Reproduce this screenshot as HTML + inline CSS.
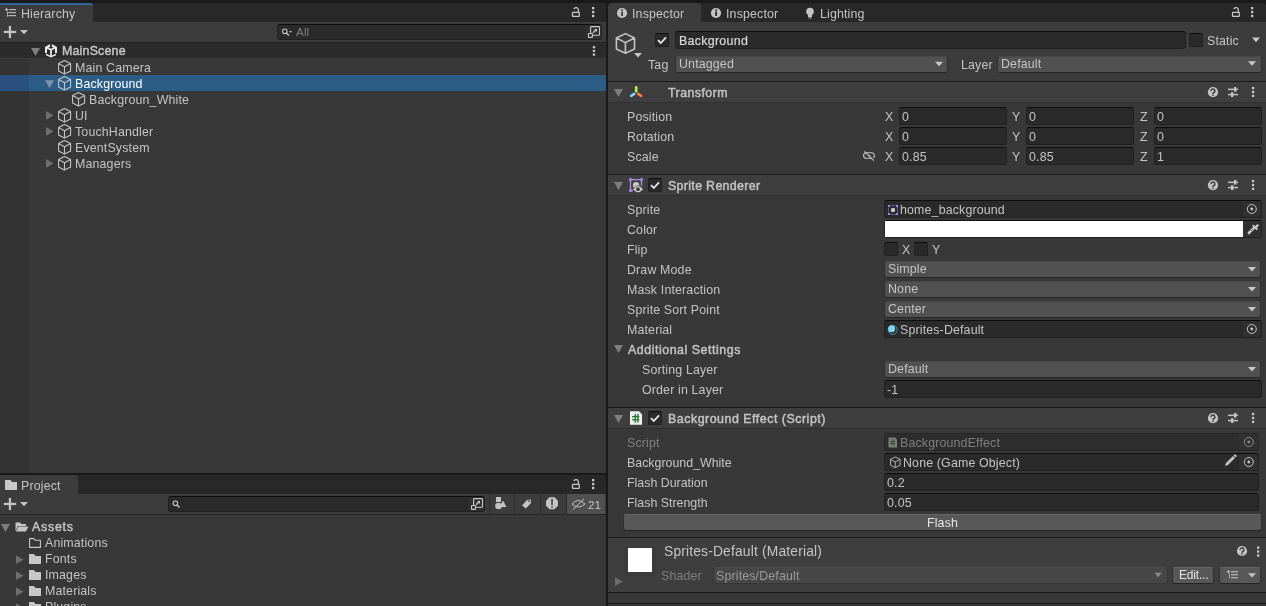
<!DOCTYPE html>
<html><head><meta charset="utf-8">
<style>
*{box-sizing:border-box;margin:0;padding:0}
html,body{width:1266px;height:606px;overflow:hidden;background:#191919}
body{position:relative;font-family:"Liberation Sans",sans-serif;font-size:12.4px;color:#c4c4c4}
.a{position:absolute}
.t{position:absolute;white-space:pre;line-height:16px;will-change:transform;letter-spacing:0.15px}
.b{font-weight:normal;letter-spacing:0.45px;-webkit-text-stroke:0.45px #c4c4c4}
.fld{position:absolute;background:#2a2a2a;border:1px solid #212121;border-top-color:#0d0d0d;border-radius:3px;height:18px}
.dd{position:absolute;background:#515151;border:1px solid #303030;border-top-color:#474747;border-bottom-color:#262626;border-radius:3px;height:17px}
.btn{position:absolute;background:#585858;border:1px solid #303030;border-top-color:#656565;border-radius:3px}
.chk{position:absolute;background:#2a2a2a;border:1px solid #212121;border-top-color:#0d0d0d;border-radius:2px;width:14px;height:14px}
.hdr{position:absolute;left:608px;width:658px;height:20px;background:#3e3e3e}
.line{position:absolute;left:608px;width:658px;height:1px;background:#1a1a1a}
.hl{position:absolute;left:608px;width:658px;height:1px;background:#303030}
#ov{position:absolute;left:0;top:0;overflow:visible}
</style></head><body>

<!-- ============ HIERARCHY ============ -->
<div class="a" style="left:0;top:3px;width:606px;height:470px;background:#383838;border-top-right-radius:4px;overflow:hidden">
  <div class="a" style="left:0;top:0;width:606px;height:19px;background:#282828"></div>
  <div class="a" style="left:0;top:0;width:93px;height:19px;background:#3c3c3c;border-top-right-radius:3px;border-top:2px solid #2e6598"></div>
  <div class="a" style="left:0;top:19px;width:606px;height:21px;background:#3c3c3c;border-bottom:1px solid #232323"></div>
  <div class="a" style="left:0;top:40px;width:606px;height:15px;background:#2b2b2b"></div>
  <div class="a" style="left:0;top:55px;width:606px;height:1px;background:#3a3a3a"></div>
  <div class="a" style="left:0;top:56px;width:29px;height:415px;background:#333333"></div>
  <div class="a" style="left:0;top:72px;width:606px;height:16px;background:#2c5d87"></div>
  <div class="a" style="left:0;top:72px;width:29px;height:16px;background:#2a5080"></div>
</div>
<div class="t" style="left:21px;top:6px">Hierarchy</div>
<div class="t b" style="left:62px;top:43px;letter-spacing:0.2px">MainScene</div>
<div class="t" style="left:75px;top:59.5px">Main Camera</div>
<div class="t" style="left:75px;top:75.5px;color:#fff">Background</div>
<div class="t" style="left:89px;top:91.5px">Backgroun_White</div>
<div class="t" style="left:75px;top:107.5px">UI</div>
<div class="t" style="left:75px;top:123.5px">TouchHandler</div>
<div class="t" style="left:75px;top:139.5px">EventSystem</div>
<div class="t" style="left:75px;top:155.5px">Managers</div>

<!-- search -->
<div class="a" style="left:277px;top:24px;width:325px;height:16px;background:#2a2a2a;border:1px solid #212121;border-top-color:#0d0d0d;border-radius:3px"></div>
<div class="a" style="left:585px;top:25px;width:16px;height:14px;background:#303030;border-radius:0 2px 2px 0"></div>
<div class="t" style="left:296px;top:24px;color:#7f7f7f;font-size:11.6px">All</div>

<!-- ============ PROJECT ============ -->
<div class="a" style="left:0;top:475px;width:606px;height:131px;background:#383838;border-top-right-radius:4px;overflow:hidden">
  <div class="a" style="left:0;top:0;width:606px;height:19px;background:#282828"></div>
  <div class="a" style="left:0;top:0;width:78px;height:19px;background:#3c3c3c;border-top-right-radius:3px"></div>
  <div class="a" style="left:0;top:19px;width:606px;height:21px;background:#3c3c3c;border-bottom:1px solid #242424"></div>
  <div class="a" style="left:489px;top:19px;width:25px;height:20px;background:#3c3c3c;border-left:1px solid #2e2e2e"></div>
  <div class="a" style="left:514px;top:19px;width:26px;height:20px;background:#3c3c3c;border-left:1px solid #2e2e2e"></div>
  <div class="a" style="left:540px;top:19px;width:26px;height:20px;background:#3c3c3c;border-left:1px solid #2e2e2e"></div>
  <div class="a" style="left:566px;top:19px;width:39px;height:20px;background:#505050;border-left:1px solid #2e2e2e"></div>
</div>
<div class="a" style="left:168px;top:496px;width:317px;height:16px;background:#2a2a2a;border:1px solid #212121;border-top-color:#0d0d0d;border-radius:3px"></div>
<div class="a" style="left:469px;top:497px;width:15px;height:14px;background:#303030;border-radius:0 2px 2px 0"></div>
<div class="t" style="left:21px;top:478px">Project</div>
<div class="t" style="left:587.5px;top:497px;font-size:11.6px">21</div>
<div class="t b" style="left:32px;top:519px;letter-spacing:0.75px">Assets</div>
<div class="t" style="left:45px;top:535px">Animations</div>
<div class="t" style="left:45px;top:551px">Fonts</div>
<div class="t" style="left:45px;top:567px">Images</div>
<div class="t" style="left:45px;top:583px">Materials</div>
<div class="t" style="left:45px;top:599px">Plugins</div>

<!-- ============ INSPECTOR ============ -->
<div class="a" style="left:608px;top:3px;width:658px;height:603px;background:#383838;border-top-left-radius:4px;border-top-right-radius:4px;overflow:hidden">
  <div class="a" style="left:0;top:0;width:658px;height:19px;background:#282828"></div>
  <div class="a" style="left:0;top:0;width:93px;height:19px;background:#3c3c3c;border-top-right-radius:3px"></div>
  <div class="a" style="left:0;top:19px;width:658px;height:59px;background:#3c3c3c"></div>
</div>
<div class="t" style="left:632px;top:6px">Inspector</div>
<div class="t" style="left:726px;top:6px">Inspector</div>
<div class="t" style="left:820px;top:6px">Lighting</div>

<!-- GameObject header -->
<div class="fld" style="left:675px;top:31px;width:511px"></div>
<div class="t" style="left:678.5px;top:33px;color:#d8d8d8;letter-spacing:0.3px;-webkit-text-stroke:0.2px #d8d8d8">Background</div>
<div class="chk" style="left:655px;top:33px"></div>
<div class="chk" style="left:1189px;top:33px"></div>
<div class="t" style="left:1207px;top:33px">Static</div>
<div class="t" style="left:648px;top:57px">Tag</div>
<div class="dd" style="left:675px;top:56px;width:273px;height:17px"></div>
<div class="t" style="left:678.5px;top:56px">Untagged</div>
<div class="t" style="left:961px;top:57px">Layer</div>
<div class="dd" style="left:997px;top:56px;width:265px;height:17px"></div>
<div class="t" style="left:1001px;top:56px">Default</div>

<!-- Transform -->
<div class="line" style="top:81px"></div>
<div class="hdr" style="top:82px"></div>
<div class="hl" style="top:102px"></div>
<div class="t b" style="left:668px;top:85px">Transform</div>
<div class="t" style="left:627px;top:109px">Position</div>
<div class="t" style="left:627px;top:129px">Rotation</div>
<div class="t" style="left:627px;top:149px">Scale</div>

<div class="t" style="left:885px;top:109px">X</div>
<div class="fld" style="left:899px;top:107px;width:108px"></div>
<div class="t" style="left:902px;top:109px">0</div>
<div class="t" style="left:1012px;top:109px">Y</div>
<div class="fld" style="left:1026px;top:107px;width:108px"></div>
<div class="t" style="left:1029px;top:109px">0</div>
<div class="t" style="left:1140px;top:109px">Z</div>
<div class="fld" style="left:1154px;top:107px;width:108px"></div>
<div class="t" style="left:1157px;top:109px">0</div>

<div class="t" style="left:885px;top:129px">X</div>
<div class="fld" style="left:899px;top:127px;width:108px"></div>
<div class="t" style="left:902px;top:129px">0</div>
<div class="t" style="left:1012px;top:129px">Y</div>
<div class="fld" style="left:1026px;top:127px;width:108px"></div>
<div class="t" style="left:1029px;top:129px">0</div>
<div class="t" style="left:1140px;top:129px">Z</div>
<div class="fld" style="left:1154px;top:127px;width:108px"></div>
<div class="t" style="left:1157px;top:129px">0</div>

<div class="t" style="left:885px;top:149px">X</div>
<div class="fld" style="left:899px;top:147px;width:108px"></div>
<div class="t" style="left:902px;top:149px">0.85</div>
<div class="t" style="left:1012px;top:149px">Y</div>
<div class="fld" style="left:1026px;top:147px;width:108px"></div>
<div class="t" style="left:1029px;top:149px">0.85</div>
<div class="t" style="left:1140px;top:149px">Z</div>
<div class="fld" style="left:1154px;top:147px;width:108px"></div>
<div class="t" style="left:1157px;top:149px">1</div>

<!-- Sprite Renderer -->
<div class="line" style="top:174px"></div>
<div class="hdr" style="top:175px"></div>
<div class="hl" style="top:195px"></div>
<div class="chk" style="left:648px;top:178px"></div>
<div class="t b" style="left:668px;top:178px;letter-spacing:0.33px">Sprite Renderer</div>

<div class="t" style="left:627px;top:202px">Sprite</div>
<div class="t" style="left:627px;top:222px">Color</div>
<div class="t" style="left:627px;top:242px">Flip</div>
<div class="t" style="left:627px;top:262px">Draw Mode</div>
<div class="t" style="left:627px;top:282px">Mask Interaction</div>
<div class="t" style="left:627px;top:302px">Sprite Sort Point</div>
<div class="t" style="left:627px;top:322px">Material</div>
<div class="t b" style="left:628px;top:342px;letter-spacing:0.54px">Additional Settings</div>
<div class="t" style="left:642px;top:362px">Sorting Layer</div>
<div class="t" style="left:642px;top:382px">Order in Layer</div>

<div class="fld" style="left:884px;top:200px;width:378px"></div>
<div class="a" style="left:1243px;top:201px;width:18px;height:16px;background:#303030;border-radius:0 2px 2px 0"></div>
<div class="t" style="left:900px;top:202px">home_background</div>
<div class="fld" style="left:884px;top:220px;width:378px"></div>
<div class="a" style="left:885px;top:221px;width:358px;height:16px;background:#ffffff"></div>
<div class="a" style="left:1243px;top:221px;width:18px;height:16px;background:#303030;border-radius:0 2px 2px 0"></div>
<div class="chk" style="left:884px;top:242px"></div>
<div class="t" style="left:902px;top:242px">X</div>
<div class="chk" style="left:914px;top:242px"></div>
<div class="t" style="left:932px;top:242px">Y</div>
<div class="dd" style="left:884px;top:261px;width:377px"></div>
<div class="t" style="left:888px;top:261px">Simple</div>
<div class="dd" style="left:884px;top:281px;width:377px"></div>
<div class="t" style="left:888px;top:281px">None</div>
<div class="dd" style="left:884px;top:301px;width:377px"></div>
<div class="t" style="left:888px;top:301px">Center</div>
<div class="fld" style="left:884px;top:320px;width:378px"></div>
<div class="a" style="left:1243px;top:321px;width:18px;height:16px;background:#303030;border-radius:0 2px 2px 0"></div>
<div class="t" style="left:900px;top:322px">Sprites-Default</div>
<div class="dd" style="left:884px;top:361px;width:377px"></div>
<div class="t" style="left:888px;top:361px">Default</div>
<div class="fld" style="left:884px;top:380px;width:378px"></div>
<div class="t" style="left:887px;top:382px">-1</div>

<!-- Background Effect (Script) -->
<div class="line" style="top:407px"></div>
<div class="hdr" style="top:408px"></div>
<div class="hl" style="top:428px"></div>
<div class="chk" style="left:648px;top:411px"></div>
<div class="t b" style="left:668px;top:411px;letter-spacing:0.52px">Background Effect (Script)</div>

<div class="t" style="left:627px;top:435px;color:#7f7f7f">Script</div>
<div class="t" style="left:627px;top:455px;letter-spacing:0">Background_White</div>
<div class="t" style="left:627px;top:475px;letter-spacing:0">Flash Duration</div>
<div class="t" style="left:627px;top:495px;letter-spacing:0">Flash Strength</div>

<div class="fld" style="left:884px;top:433px;width:375px;border-color:#262626;background:#2d2d2d"></div>
<div class="a" style="left:1239px;top:434px;width:19px;height:16px;background:#313131;border-radius:0 2px 2px 0"></div>
<div class="t" style="left:900px;top:435px;color:#7f7f7f">BackgroundEffect</div>
<div class="fld" style="left:884px;top:453px;width:375px"></div>
<div class="a" style="left:1239px;top:454px;width:19px;height:16px;background:#303030;border-radius:0 2px 2px 0"></div>
<div class="t" style="left:903px;top:455px">None (Game Object)</div>
<div class="fld" style="left:884px;top:473px;width:375px"></div>
<div class="t" style="left:887px;top:475px">0.2</div>
<div class="fld" style="left:884px;top:493px;width:375px"></div>
<div class="t" style="left:887px;top:495px">0.05</div>
<div class="btn" style="left:623px;top:514px;width:639px;height:17px;border-bottom-color:#242424"></div>
<div class="t" style="left:927px;top:515px;color:#e4e4e4">Flash</div>

<!-- Material -->
<div class="line" style="top:537px"></div>
<div class="a" style="left:608px;top:538px;width:658px;height:54px;background:#3e3e3e"></div>
<div class="line" style="top:592px"></div>
<div class="line" style="top:603px"></div>
<div class="a" style="left:624px;top:545px;width:32px;height:31px;background:#3b3b3b;border-radius:2px"></div>
<div class="a" style="left:628px;top:548px;width:24px;height:24px;background:#fff"></div>
<div class="t" style="left:664px;top:543.5px;font-size:13.8px;letter-spacing:0.18px">Sprites-Default (Material)</div>
<div class="t" style="left:661px;top:567.7px;color:#7f7f7f">Shader</div>
<div class="dd" style="left:713px;top:567px;width:455px;height:17px;background:#474747;border-color:#363636;border-top-color:#4c4c4c"></div>
<div class="t" style="left:716px;top:567.5px;color:#9a9a9a">Sprites/Default</div>
<div class="btn" style="left:1172px;top:567px;width:42px;height:17px;border-bottom-color:#242424"></div>
<div class="t" style="left:1178.5px;top:567px;color:#e4e4e4;font-size:12px;letter-spacing:-0.2px">Edit...</div>
<div class="btn" style="left:1219px;top:567px;width:42px;height:17px;border-bottom-color:#242424"></div>


<svg id="ov" width="1266" height="606" viewBox="0 0 1266 606">
<defs>
  <g id="cube" fill="none" stroke="#c4c4c4" stroke-width="1.1" stroke-linejoin="round">
    <path d="M6.5 0.6 L12.6 3.6 L12.6 10.9 L6.5 13.9 L0.6 10.9 L0.6 3.6 Z M0.6 3.6 L6.5 6.8 L12.6 3.6 M6.5 6.8 L6.5 13.9"/>
  </g>
  <g id="kebab" fill="#c8c8c8"><rect x="0" y="0" width="2.3" height="2.3"/><rect x="0" y="3.9" width="2.3" height="2.3"/><rect x="0" y="7.8" width="2.3" height="2.3"/></g>
  <path id="tdown" d="M0 0 L9 0 L4.5 8 Z" fill="#7f7f7f"/>
  <path id="tright" d="M0 0 L7.5 4.4 L0 8.8 Z" fill="#6f6f6f"/>
  <g id="lock" fill="none" stroke="#c8c8c8" stroke-width="1.25">
    <rect x="1.2" y="5.8" width="6.8" height="4.0" rx="0.6"/>
    <path d="M7.1 5.8 L7.1 3.4 A2.45 2.45 0 0 0 2.5 2.3"/>
  </g>
  <g id="target" fill="none" stroke="#c4c4c4" stroke-width="1"><circle cx="0" cy="0" r="4.5"/><circle cx="0" cy="0" r="1.4" fill="#c4c4c4" stroke="none"/></g>
  <g id="chkmark"><path d="M3 7.2 L5.8 10 L11 4.3" fill="none" stroke="#e8e8e8" stroke-width="1.8"/></g>
  <path id="ddarrow" d="M0 0 L8 0 L4 4.6 Z" fill="#c8c8c8"/>
  <g id="help"><circle cx="5.2" cy="5.2" r="5.1" fill="#c4c4c4"/><path d="M3.3 4.1 A1.9 1.9 0 1 1 5.9 5.7 C5.3 6 5.2 6.2 5.2 6.9" fill="none" stroke="#3e3e3e" stroke-width="1.5"/><rect x="4.5" y="7.6" width="1.5" height="1.4" fill="#3e3e3e"/></g>
  <g id="preset" fill="#c4c4c4"><rect x="0" y="1.6" width="10" height="1.5"/><rect x="6" y="0" width="2.4" height="4.6"/><rect x="0" y="6.8" width="10" height="1.5"/><rect x="3" y="5.2" width="2.4" height="4.8"/></g>
</defs>

<!-- hierarchy tab icon -->
<g fill="#c4c4c4">
  <rect x="9" y="9.1" width="7" height="1.1"/><rect x="9" y="12.1" width="7" height="1.1"/><rect x="9" y="15.1" width="7" height="1.1"/>
  <rect x="5" y="9.1" width="3.2" height="1"/><rect x="6.1" y="7.9" width="1" height="3.2"/>
  <rect x="7.1" y="11.3" width="0.9" height="5.4" opacity="0.8"/>
  <rect x="7.1" y="12.1" width="1.6" height="1.1"/><rect x="7.1" y="15.1" width="1.6" height="1.1"/>
</g>
<use href="#lock" x="571.3" y="6.6"/>
<use href="#kebab" x="592" y="7"/>
<!-- plus -->
<g fill="#c4c4c4"><rect x="3.8" y="30.8" width="12.4" height="2.3"/><rect x="8.8" y="26" width="2.3" height="12"/></g>
<path d="M20 30 L28 30 L24 34.2 Z" fill="#c4c4c4"/>
<!-- search magnifier -->
<g fill="none" stroke="#c8c8c8" stroke-width="1.05"><circle cx="284.8" cy="31.3" r="2.3"/><path d="M286.5 33.1 L288.9 35.6" stroke-width="1.4"/></g>
<path d="M289 31 L292 31 L290.5 32.8 Z" fill="#c4c4c4"/>
<!-- expand button -->
<g fill="none" stroke="#c8c8c8" stroke-width="1.1"><rect x="590.6" y="26.6" width="8.9" height="8.6" rx="0.8"/><rect x="588.5" y="33.5" width="3.9" height="3.9" fill="#303030" rx="0.5"/><path d="M593 32.8 L596.6 29.2" stroke-width="1.3"/></g><path d="M594 29 L597 29 L597 32 Z" fill="#c8c8c8"/>
<use href="#kebab" transform="translate(592.8,46.1) scale(1,0.95)"/>
<!-- scene -->
<use href="#tdown" x="31" y="48"/>
<g fill="#eaeaea">
  <path d="M45 46.9 L50.1 43.9 L50.1 46.7 L47.2 48.4 L46.9 53 L45 53 Z"/>
  <path d="M57 46.9 L51.9 43.9 L51.9 46.7 L54.8 48.4 L55.1 53 L57 53 Z"/>
  <path d="M47.2 47.7 L51 49.8 L54.8 47.7" fill="none" stroke="#eaeaea" stroke-width="1.7"/>
  <rect x="50.15" y="49" width="1.7" height="7.5"/>
  <path d="M45.9 53.5 L51 56.1 L56.1 53.5 L56.1 55.2 L51 57.5 L45.9 55.2 Z"/>
</g>
<!-- cubes -->
<use href="#cube" x="58" y="60"/>
<path d="M45 80.2 L54 80.2 L49.5 88 Z" fill="#7d93ab"/>
<use href="#cube" x="58" y="76"/>
<use href="#cube" x="72" y="92"/>
<use href="#tright" x="46" y="111"/>
<use href="#cube" x="58" y="108"/>
<use href="#tright" x="46" y="127"/>
<use href="#cube" x="58" y="124"/>
<use href="#cube" x="58" y="140"/>
<use href="#tright" x="46" y="159"/>
<use href="#cube" x="58" y="156"/>

<!-- PROJECT -->
<g fill="#c8c8c8"><path d="M5 480 L10.5 480 L12 482 L17 482 L17 490 L5 490 Z"/></g>
<use href="#lock" x="571.3" y="478.6"/>
<use href="#kebab" x="592" y="479"/>
<g fill="#c4c4c4"><rect x="3.8" y="502.8" width="12.4" height="2.3"/><rect x="8.8" y="498" width="2.3" height="12"/></g>
<path d="M20 502 L28 502 L24 506.2 Z" fill="#c4c4c4"/>
<g fill="none" stroke="#c8c8c8" stroke-width="1.05"><circle cx="175.4" cy="503.2" r="2.3"/><path d="M177.1 505 L179.5 507.5" stroke-width="1.4"/></g>
<g fill="none" stroke="#c8c8c8" stroke-width="1.1"><rect x="473.6" y="498.6" width="8.9" height="8.6" rx="0.8"/><rect x="471.5" y="505.5" width="3.9" height="3.9" fill="#303030" rx="0.5"/><path d="M476 504.8 L479.6 501.2" stroke-width="1.3"/></g><path d="M477 501 L480 501 L480 504 Z" fill="#c8c8c8"/>
<!-- filter icons -->
<g fill="#c4c4c4"><rect x="496" y="497" width="5" height="5"/><circle cx="498.5" cy="506" r="3.3"/><path d="M503 500.5 L506.5 507 L499.5 507 Z"/></g>
<path d="M522 505.5 L527 500 L531 499.5 L531 503 L526 508.5 Z" fill="#c4c4c4"/>
<circle cx="529.2" cy="501.2" r="0.9" fill="#3c3c3c"/>
<path d="M549.5 497.2 L554.5 497.2 L558 500.7 L558 505.7 L554.5 509.2 L549.5 509.2 L546 505.7 L546 500.7 Z" fill="#c4c4c4"/>
<rect x="551.3" y="499" width="1.5" height="6" fill="#3c3c3c"/><rect x="551.3" y="506.2" width="1.5" height="1.5" fill="#3c3c3c"/>
<g fill="none" stroke="#c4c4c4" stroke-width="1"><path d="M572 504 Q578 497 585 504 Q578 510 572 504 Z"/><path d="M573 509.5 L584 499"/></g>
<!-- project tree -->
<use href="#tdown" x="1" y="524" />
<path d="M15.5 522.5 L20 522.5 L21.5 524 L26 524 L26 526 L18 526 L15.5 531 Z" fill="#c4c4c4"/>
<path d="M18.5 526.5 L28.5 526.5 L26 531.5 L15.8 531.5 Z" fill="#c4c4c4"/>
<path d="M29.6 538.6 L33.8 538.6 L35.3 540.3 L40.4 540.3 L40.4 547.4 L29.6 547.4 Z" fill="none" stroke="#c8c8c8" stroke-width="1.1" stroke-linejoin="round"/>
<use href="#tright" x="16" y="555.3"/>
<path d="M29 554.5 Q29 554 29.5 554 L34 554 L35.5 556 L40.5 556 Q41 556 41 556.5 L41 563.5 Q41 564 40.5 564 L29.5 564 Q29 564 29 563.5 Z" fill="#c8c8c8"/>
<use href="#tright" x="16" y="571.3"/>
<path d="M29 570.5 Q29 570 29.5 570 L34 570 L35.5 572 L40.5 572 Q41 572 41 572.5 L41 579.5 Q41 580 40.5 580 L29.5 580 Q29 580 29 579.5 Z" fill="#c8c8c8"/>
<use href="#tright" x="16" y="587.3"/>
<path d="M29 586.5 Q29 586 29.5 586 L34 586 L35.5 588 L40.5 588 Q41 588 41 588.5 L41 595.5 Q41 596 40.5 596 L29.5 596 Q29 596 29 595.5 Z" fill="#c8c8c8"/>
<use href="#tright" x="16" y="603.3"/>
<path d="M29 602.5 Q29 602 29.5 602 L34 602 L35.5 604 L40.5 604 Q41 604 41 604.5 L41 611.5 Q41 612 40.5 612 L29.5 612 Q29 612 29 611.5 Z" fill="#c8c8c8"/>

<!-- INSPECTOR tabs -->
<g><circle cx="622" cy="13" r="5.1" fill="#c4c4c4"/><rect x="621.2" y="11.5" width="1.8" height="4.5" fill="#3c3c3c"/><rect x="621.2" y="9.3" width="1.8" height="1.5" fill="#3c3c3c"/></g>
<g><circle cx="716" cy="13" r="5.1" fill="#c4c4c4"/><rect x="715.2" y="11.5" width="1.8" height="4.5" fill="#282828"/><rect x="715.2" y="9.3" width="1.8" height="1.5" fill="#282828"/></g>
<g fill="#c4c4c4"><circle cx="810" cy="11.5" r="3.8"/><rect x="808" y="14" width="4" height="3"/><rect x="808.5" y="17.4" width="3" height="1"/></g>
<use href="#lock" x="1231.3" y="6.6"/>
<use href="#kebab" x="1251" y="7"/>
<!-- big cube -->
<g fill="none" stroke="#c4c4c4" stroke-width="1.6" stroke-linejoin="round">
  <path d="M625.4 33.6 L634.5 38 L634.5 49 L625.4 53.2 L616.4 49 L616.4 38 Z M616.4 38 L625.4 42.6 L634.5 38 M625.4 42.6 L625.4 53.2"/>
</g>
<path d="M634 53 L642 53 L638 57.4 Z" fill="#c4c4c4"/>
<use href="#chkmark" x="655" y="33"/>
<use href="#ddarrow" x="935" y="61.7"/>
<use href="#ddarrow" x="1248" y="61.2"/>
<use href="#ddarrow" x="1252" y="37.6"/>

<!-- Transform header -->
<use href="#tdown" x="614" y="89"/>
<g stroke-linecap="round">
  <path d="M636.2 87.4 L636.2 91.2" stroke="#b2f255" stroke-width="2.6"/>
  <path d="M631.2 95.8 L634.2 93.8" stroke="#7fd6ff" stroke-width="2.6"/>
  <path d="M638.2 93.8 L641.2 95.8" stroke="#ff7a3c" stroke-width="2.6"/>
</g>
<use href="#help" x="1207.8" y="87"/>
<use href="#preset" x="1228" y="87"/>
<use href="#kebab" x="1251.9" y="86.9"/>
<!-- link icon -->
<g fill="none" stroke="#c4c4c4" stroke-width="1.1"><path d="M872 158.3 L866.4 158.3 A2.8 2.8 0 0 1 866.4 152.7 L871.6 152.7 A2.8 2.8 0 0 1 873.2 157.8"/><path d="M864.4 151.3 L873.8 160.6"/><path d="M868.5 155.5 L870.5 155.5" stroke-width="0.8"/></g>

<!-- Sprite Renderer header -->
<use href="#tdown" x="614" y="182"/>
<g fill="none" stroke="#a98df5" stroke-width="1.3"><path d="M633 190.5 L630.5 190.5 L630.5 179.6 L641.5 179.6 L641.5 185.8"/></g>
<g fill="#a98df5"><circle cx="630.5" cy="179.6" r="1.5"/><circle cx="641.5" cy="179.6" r="1.5"/><circle cx="630.5" cy="190.6" r="1.5"/></g>
<circle cx="636.1" cy="185.3" r="3.2" fill="#c8c8c8"/>
<path d="M632.2 189.2 Q638 181.6 643.8 189.2 Q638 196.4 632.2 189.2 Z" fill="#3e3e3e"/>
<path d="M633 189.2 Q638 183 643 189.2 Q638 195.2 633 189.2 Z" fill="#c8c8c8"/>
<circle cx="638" cy="189.2" r="1.9" fill="#3e3e3e"/>
<use href="#chkmark" x="648" y="178"/>
<use href="#help" x="1207.8" y="180"/>
<use href="#preset" x="1228" y="180"/>
<use href="#kebab" x="1251.9" y="179.9"/>

<!-- sprite field icons -->
<g fill="none" stroke="#8e7ad8" stroke-width="1" stroke-dasharray="1.5 7.5 1.5 0"><rect x="888.5" y="205.5" width="9" height="9"/></g>
<g fill="#9d88f0"><rect x="888" y="205" width="2" height="2"/><rect x="896" y="205" width="2" height="2"/><rect x="888" y="213" width="2" height="2"/><rect x="896" y="213" width="2" height="2"/></g>
<path d="M890.5 205.5 L895.5 205.5 M890.5 214.5 L895.5 214.5 M888.5 207.5 L888.5 212.5 M897.5 207.5 L897.5 212.5" stroke="#5e4f98" stroke-width="1"/>
<circle cx="893" cy="210" r="2.2" fill="#c8c8c8"/>
<use href="#target" x="1251.8" y="209"/>
<!-- eyedropper -->
<g stroke="#c8c8c8" stroke-linecap="round"><path d="M1248.9 233 L1254 227.9" stroke-width="2.6"/><path d="M1253.3 225.7 L1256.8 229.2" stroke-width="1.9"/><path d="M1255.6 227.4 L1257.6 225.4" stroke-width="2.4"/></g><path d="M1251 231 L1252.4 229.6" stroke="#444" stroke-width="0.9"/>
<use href="#ddarrow" x="1248" y="267"/>
<use href="#ddarrow" x="1248" y="287"/>
<use href="#ddarrow" x="1248" y="307"/>
<!-- material icon -->
<circle cx="892.7" cy="329.9" r="4.5" fill="none" stroke="#4a90b0" stroke-width="1"/>
<circle cx="891.6" cy="328.7" r="3.5" fill="#7fd4f8"/>
<use href="#target" x="1251.8" y="329"/>
<use href="#tdown" x="614" y="345"/>
<use href="#ddarrow" x="1248" y="367"/>

<!-- Script header -->
<use href="#tdown" x="614" y="415"/>
<g><path d="M630 411.2 L639 411.2 L642 414.2 L642 424.8 L630 424.8 Z" fill="#f0f0f0"/><g fill="#237a2c"><rect x="634.5" y="413.9" width="1.4" height="8.8"/><rect x="637.2" y="413.9" width="1.4" height="8.8"/><rect x="632" y="416" width="7.3" height="1.3"/><rect x="632" y="419.1" width="7.3" height="1.3"/></g></g>
<use href="#chkmark" x="648" y="411"/>
<use href="#help" x="1207.8" y="413"/>
<use href="#preset" x="1228" y="413"/>
<use href="#kebab" x="1251.9" y="412.9"/>
<g opacity="0.55"><path d="M888.5 437.5 L895 437.5 L897 439.5 L897 447.5 L888.5 447.5 Z" fill="#c4c4c4"/><g fill="#2f7a35"><rect x="891.6" y="439.3" width="0.9" height="6.4"/><rect x="893.4" y="439.3" width="0.9" height="6.4"/><rect x="890.3" y="441" width="5" height="0.9"/><rect x="890.3" y="443.2" width="5" height="0.9"/></g></g>
<g opacity="0.6"><use href="#target" x="1248.8" y="442"/></g>
<use href="#cube" transform="translate(890,456.5) scale(0.8)"/>
<g fill="#c4c4c4"><path d="M1225 466 L1226 463 L1233 456 L1235 458 L1228 465 Z"/><path d="M1233.5 455.5 L1235 454 L1237 456 L1235.5 457.5 Z"/></g>
<use href="#target" x="1248.8" y="462"/>

<!-- Material footer -->
<path d="M615 577.2 L622.8 581.6 L615 586 Z" fill="#6c6c6c"/>
<use href="#help" x="1236.8" y="545.8"/>
<use href="#kebab" x="1257" y="546.5"/>
<path d="M1154.4 572.8 L1161.8 572.8 L1158.1 577.2 Z" fill="#8a8a8a"/>
<g fill="#c4c4c4"><rect x="1231" y="571.2" width="7" height="1.1"/><rect x="1231" y="574.2" width="7" height="1.1"/><rect x="1231" y="577.2" width="7" height="1.1"/><rect x="1227" y="571.2" width="3" height="1"/><rect x="1228" y="570.2" width="1" height="3"/><rect x="1229" y="573.2" width="0.9" height="5.2" opacity="0.8"/></g>
<path d="M1248 573.3 L1256 573.3 L1252 577.5 Z" fill="#c4c4c4"/>
</svg>
</body></html>
